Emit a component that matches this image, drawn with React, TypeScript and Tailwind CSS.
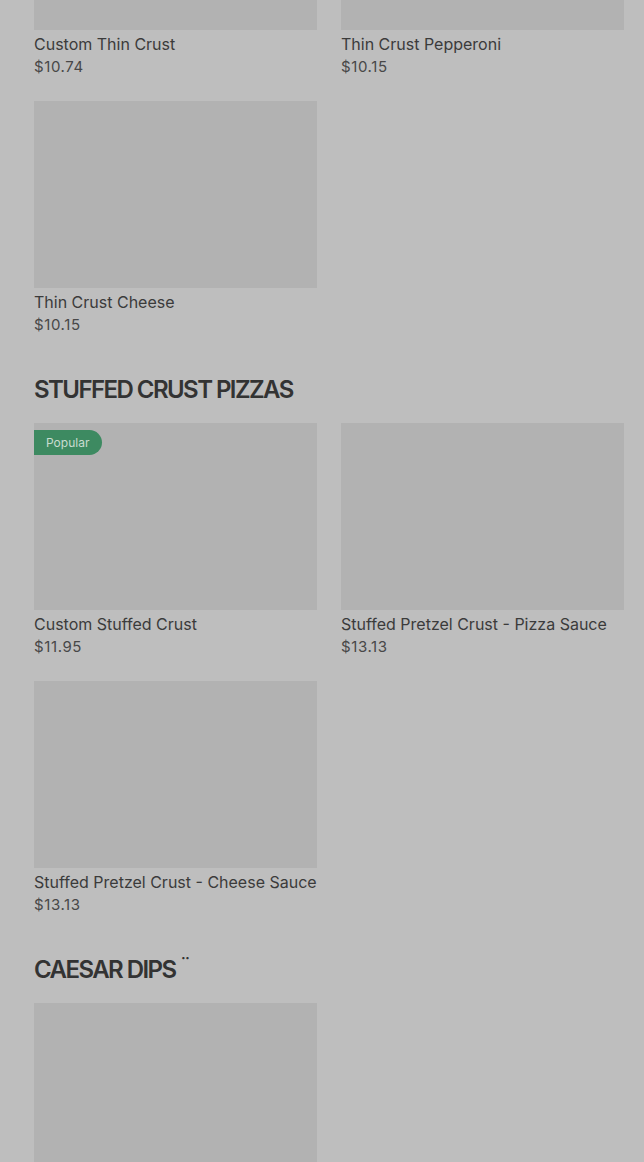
type Item = { name?: string; price?: string; popular?: boolean };

const thinCrust: Item[] = [
  { name: "Custom Thin Crust", price: "$10.74" },
  { name: "Thin Crust Pepperoni", price: "$10.15" },
  { name: "Thin Crust Cheese", price: "$10.15" },
];

const stuffedCrust: Item[] = [
  { name: "Custom Stuffed Crust", price: "$11.95", popular: true },
  { name: "Stuffed Pretzel Crust - Pizza Sauce", price: "$13.13" },
  { name: "Stuffed Pretzel Crust - Cheese Sauce", price: "$13.13" },
];

function ItemCard({ item }: { item: Item }) {
  return (
    <div className="flex flex-col">
      <div className="relative h-[187px] bg-[#b2b2b2]">
        {item.popular && (
          <span className="absolute left-0 top-[7px] flex h-[25px] items-center rounded-r-full bg-[#3d8a61] pl-3 pr-[13px] text-[12px] text-[#c9dcd0]">
            Popular
          </span>
        )}
      </div>
      {item.name && (
        <>
          <div className="mt-[2px] whitespace-nowrap text-[16px] leading-6 text-[#3b3b3b]">{item.name}</div>
          <div className="mt-px text-[15px] leading-5 tracking-[0.04em] text-[#484848]">{item.price}</div>
        </>
      )}
    </div>
  );
}

function Section({ title, items }: { title?: React.ReactNode; items: Item[] }) {
  return (
    <section>
      {title && (
        <h2 className="mb-[17px] mt-[39px] h-8 text-[24px] font-semibold leading-8 tracking-[-0.065em] text-[#333333]">
          {title}
        </h2>
      )}
      <div className="grid grid-cols-2 gap-x-6 gap-y-6">
        {items.map((item, i) => (
          <ItemCard key={i} item={item} />
        ))}
      </div>
    </section>
  );
}

export default function App() {
  return (
    <div className="h-[1162px] overflow-hidden bg-[#bebebe] font-['Inter',sans-serif]">
      <div className="-mt-[157px] pl-[34px] pr-[20px]">
        <Section items={thinCrust} />
        <Section title="STUFFED CRUST PIZZAS" items={stuffedCrust} />
        <Section
          title={
            <>
              CAESAR DIPS<span className="relative -top-[6px] ml-[4px] text-[20px] font-normal leading-none">¨</span>
            </>
          }
          items={[{}]}
        />
      </div>
    </div>
  );
}
